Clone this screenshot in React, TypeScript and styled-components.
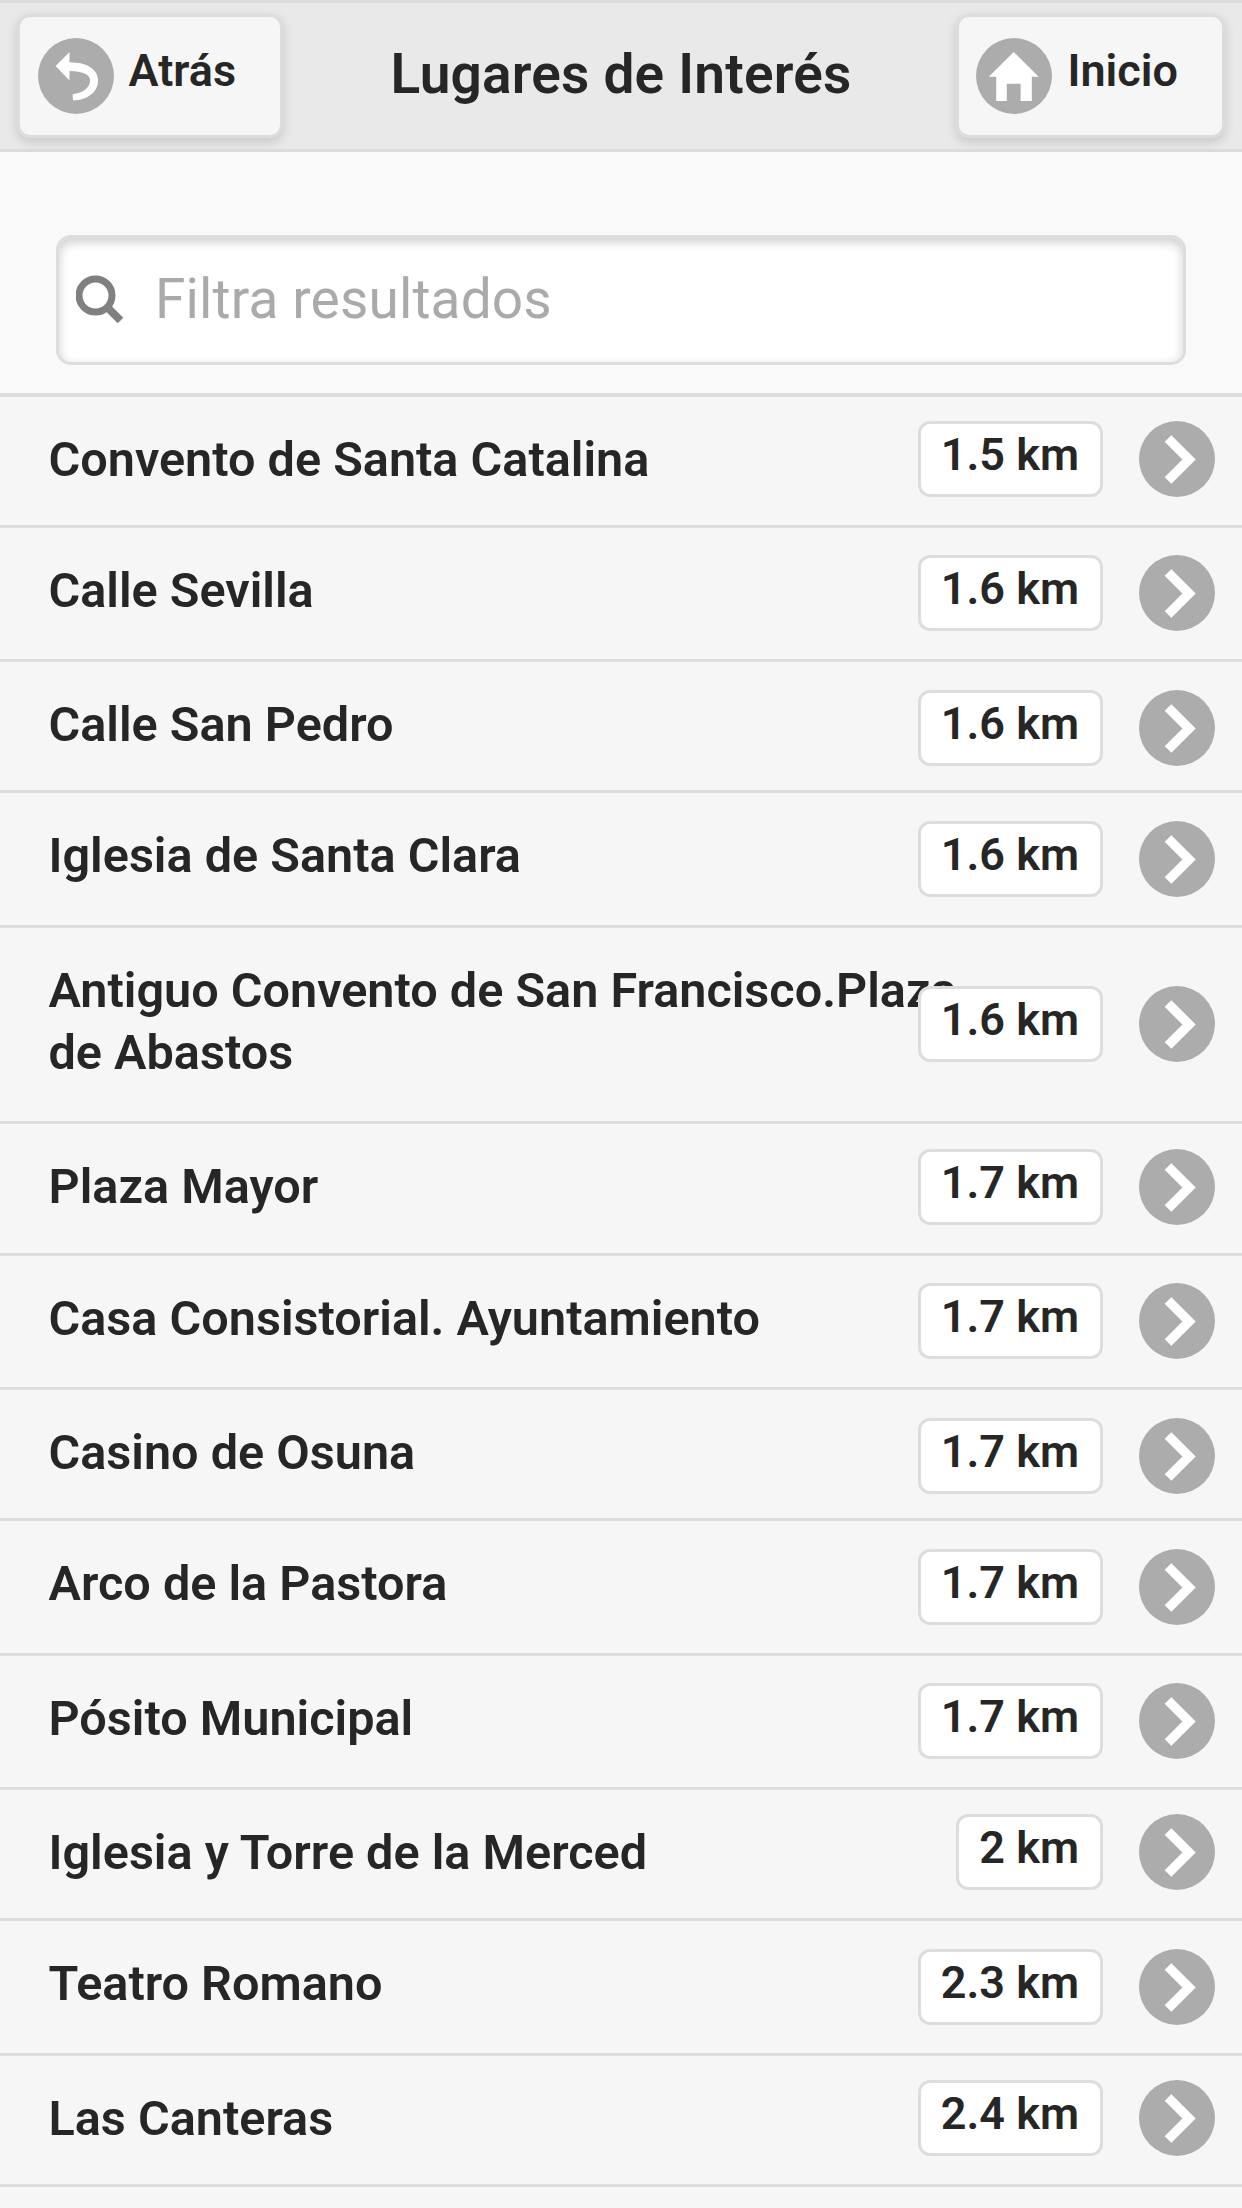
import React from 'react';
import styled, { createGlobalStyle } from 'styled-components';

const GlobalStyle = createGlobalStyle`
  *, *::before, *::after { box-sizing: border-box; }
  body {
    margin: 0;
    background: #f9f9f9;
    color: #262626;
    font-family: Roboto, "Liberation Sans", sans-serif;
  }
`;

const Page = styled.div`
  width: 1242px;
  height: 2208px;
  overflow: hidden;
  display: flex;
  flex-direction: column;
  background: #f9f9f9;
`;

const Header = styled.header`
  flex: none;
  height: 152px;
  display: flex;
  justify-content: space-between;
  align-items: flex-start;
  padding: 11px 17px 0;
  background: #e9e9e9;
  border-top: 3px solid #dcdcdc;
  border-bottom: 3px solid #dcdcdc;
`;

const Title = styled.h1`
  margin: -11px 0 0 3px;
  font-size: 55px;
  line-height: 143px;
  font-weight: 650;
  letter-spacing: 0.2px;
  white-space: nowrap;
`;

const HeaderButton = styled.button<{ $width: number }>`
  width: ${(p) => p.$width}px;
  height: 124px;
  display: flex;
  align-items: flex-start;
  gap: 15px;
  padding: 0 0 0 17.5px;
  background: #f6f6f6;
  border: 3px solid #dddddd;
  border-radius: 13px;
  box-shadow: 0 4px 11px rgba(0, 0, 0, 0.15);
  color: #262626;
  font-family: inherit;
  font-size: 45px;
  font-weight: 600;
  line-height: 108px;
`;

const Disc = styled.span<{ $top?: number }>`
  flex: none;
  display: block;
  width: 76px;
  height: 76px;
  margin-top: ${(p) => p.$top ?? 0}px;
  border-radius: 50%;
  background: #acacac;

  svg {
    display: block;
    width: 76px;
    height: 76px;
  }
`;

const FilterArea = styled.form`
  flex: none;
  height: 241px;
  padding: 83px 56px 0;
`;

const SearchBox = styled.label`
  height: 130px;
  display: flex;
  align-items: flex-start;
  padding: 0 17px;
  background: #ffffff;
  border: 3px solid #dddddd;
  border-radius: 15px;
  box-shadow: inset 0 4px 11px rgba(0, 0, 0, 0.2);

  svg {
    flex: none;
    width: 50px;
    height: 50px;
    margin-top: 37px;
  }
`;

const SearchInput = styled.input`
  flex: 1;
  min-width: 0;
  height: 122px;
  margin-left: 29px;
  padding: 0;
  border: 0;
  outline: 0;
  background: transparent;
  font-family: inherit;
  font-size: 55px;
  letter-spacing: 0.15px;
  color: #262626;

  &::placeholder {
    color: #aaaaaa;
    opacity: 1;
  }
`;

const List = styled.ul`
  flex: 1;
  margin: 0;
  padding: 0;
  list-style: none;
  background: #f6f6f6;
`;

const Row = styled.li<{ $height: number }>`
  height: ${(p) => p.$height}px;
  display: grid;
  grid-template: 1fr / 1fr;
  border-top: 3px solid #dddddd;
  background: #f6f6f6;
  overflow: hidden;

  &:first-child {
    border-top-width: 4px;
  }
`;

const Name = styled.span`
  grid-area: 1 / 1;
  max-width: 975px;
  padding: 32px 0 0 48.5px;
  font-size: 48.6px;
  font-weight: 600;
  line-height: 62.4px;
`;

const Aside = styled.span<{ $drop: number }>`
  grid-area: 1 / 1;
  display: flex;
  justify-content: flex-end;
  align-items: flex-start;
  gap: 35.5px;
  padding: ${(p) => p.$drop - 3}px 27.5px 0 0;
`;

const Distance = styled.span`
  height: 76px;
  padding: 0 21px 0 20px;
  background: #ffffff;
  border: 3px solid #dddddd;
  border-radius: 12px;
  font-size: 45px;
  font-weight: 600;
  line-height: 61px;
  white-space: nowrap;
`;

const BackIcon = () => (
  <svg viewBox="0 0 76 76" fill="#fff">
    <path d="M17.5 28 31.5 14v10.3C49 24.6 60 31 60 42.5 60 54 50 61.8 35 62.6L34.6 56.2C45.5 55 52 49.5 52 42.5 52 36 44.5 33.2 31.5 33V42.5Z" />
  </svg>
);

const HomeIcon = () => (
  <svg viewBox="0 0 76 76" fill="#fff">
    <path d="M37.7 14 62.7 38.7H55.8V63H44.6V45.8H30.8V63H20.2V38.7H12.7Z" />
  </svg>
);

const ChevronIcon = () => (
  <svg viewBox="0 0 76 76" fill="none" stroke="#fff" strokeWidth="9.5">
    <path d="M29 17.5 50 38.5 29 59.5" />
  </svg>
);

const SearchIcon = () => (
  <svg viewBox="0 0 50 50" fill="none" stroke="#808080">
    <circle cx="19.5" cy="20.5" r="16.5" strokeWidth="7" />
    <path d="M30.5 31.5 44.5 45.5" strokeWidth="8" />
  </svg>
);

const places = [
  { name: 'Convento de Santa Catalina', distance: '1.5 km', height: 132, drop: 27 },
  { name: 'Calle Sevilla', distance: '1.6 km', height: 134, drop: 30 },
  { name: 'Calle San Pedro', distance: '1.6 km', height: 131, drop: 31 },
  { name: 'Iglesia de Santa Clara', distance: '1.6 km', height: 135, drop: 31 },
  { name: 'Antiguo Convento de San Francisco.Plaza de Abastos', distance: '1.6 km', height: 196, drop: 61 },
  { name: 'Plaza Mayor', distance: '1.7 km', height: 132, drop: 28 },
  { name: 'Casa Consistorial. Ayuntamiento', distance: '1.7 km', height: 134, drop: 30 },
  { name: 'Casino de Osuna', distance: '1.7 km', height: 131, drop: 31 },
  { name: 'Arco de la Pastora', distance: '1.7 km', height: 135, drop: 31 },
  { name: 'Pósito Municipal', distance: '1.7 km', height: 134, drop: 30 },
  { name: 'Iglesia y Torre de la Merced', distance: '2 km', height: 131, drop: 27 },
  { name: 'Teatro Romano', distance: '2.3 km', height: 135, drop: 31 },
  { name: 'Las Canteras', distance: '2.4 km', height: 131, drop: 27 },
];

export default function App() {
  return (
    <>
      <GlobalStyle />
      <Page>
        <Header>
          <HeaderButton type="button" $width={266}>
            <Disc $top={21}><BackIcon /></Disc>
            Atrás
          </HeaderButton>
          <Title>Lugares de Interés</Title>
          <HeaderButton type="button" $width={269}>
            <Disc $top={21}><HomeIcon /></Disc>
            Inicio
          </HeaderButton>
        </Header>
        <FilterArea>
          <SearchBox>
            <SearchIcon />
            <SearchInput placeholder="Filtra resultados" />
          </SearchBox>
        </FilterArea>
        <List>
          {places.map((place) => (
            <Row key={place.name} $height={place.height}>
              <Name>{place.name}</Name>
              <Aside $drop={place.drop}>
                <Distance>{place.distance}</Distance>
                <Disc><ChevronIcon /></Disc>
              </Aside>
            </Row>
          ))}
          <Row $height={24} />
        </List>
      </Page>
    </>
  );
}
